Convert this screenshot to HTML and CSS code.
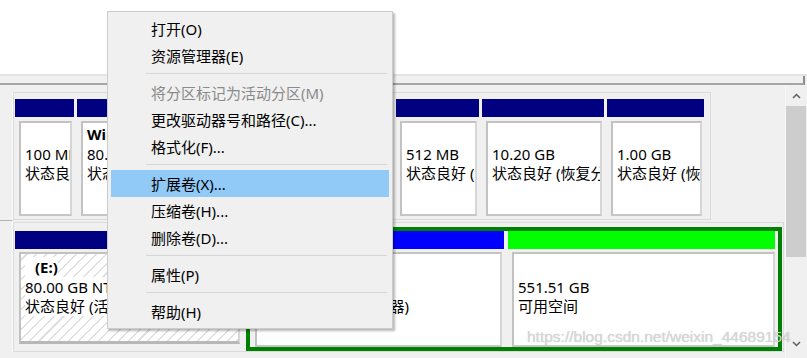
FILE: index.html
```html
<!DOCTYPE html>
<html lang="zh-CN">
<head>
  <meta charset="UTF-8" />
  <meta name="viewport" content="width=device-width, initial-scale=1" />
  <title>磁盘管理</title>
  <link rel="stylesheet" href="styles.css">
</head>
<body>
  <div class="top-pane"></div>
  <div class="splitter"></div>

  <div class="disk-pane">
    <div class="labels">
      <div class="label-cell first"></div>
      <div class="label-cell"></div>
    </div>

    <div class="disks">
      <!-- 磁盘 0 -->
      <div class="disk-row row-one">
        <div class="part w59">
          <div class="bar navy"></div>
          <div class="part-body"><div class="box"><div class="line"></div><div class="line">100 MB</div><div class="line">状态良好 (EFI 系统分区)</div></div></div>
        </div>
        <div class="part w316">
          <div class="bar navy"></div>
          <div class="part-body"><div class="box"><div class="line bold">Windows (C:)</div><div class="line">80.00 GB NTFS</div><div class="line">状态良好 (启动, 页面文件, 故障转储, 主分区)</div></div></div>
        </div>
        <div class="part w83">
          <div class="bar navy"></div>
          <div class="part-body"><div class="box"><div class="line"></div><div class="line">512 MB</div><div class="line">状态良好 (恢复分区)</div></div></div>
        </div>
        <div class="part w122">
          <div class="bar navy"></div>
          <div class="part-body"><div class="box"><div class="line"></div><div class="line">10.20 GB</div><div class="line">状态良好 (恢复分区)</div></div></div>
        </div>
        <div class="part w97">
          <div class="bar navy"></div>
          <div class="part-body"><div class="box"><div class="line"></div><div class="line">1.00 GB</div><div class="line">状态良好 (恢复分区)</div></div></div>
        </div>
      </div>

      <!-- 磁盘 1 -->
      <div class="disk-row row-two">
        <div class="part w227 primary-e">
          <div class="bar navy"></div>
          <div class="part-body"><div class="box hatched"><div class="line bold"><span> (E:)</span></div><div class="line"><span>80.00 GB NTFS</span></div><div class="line"><span>状态良好 (活动, 主分区)</span></div></div></div>
        </div>
        <div class="extended">
          <div class="part w253">
            <div class="bar blue"></div>
            <div class="part-body"><div class="box"><div class="line bold">新加卷 (F:)</div><div class="line">30.00 GB NTFS</div><div class="line">状态良好 (逻辑驱动器)</div></div></div>
          </div>
          <div class="part w267">
            <div class="bar green"></div>
            <div class="part-body flush"><div class="box"><div class="line"></div><div class="line">551.51 GB</div><div class="line">可用空间</div></div></div>
          </div>
        </div>
      </div>
    </div>

    <div class="scrollbar">
      <div class="scroll-btn">
        <svg width="9" height="6" viewBox="0 0 9 6"><path d="M1 5 L4.5 1.5 L8 5" fill="none" stroke="#606060" stroke-width="1.5"/></svg>
      </div>
      <div class="thumb"></div>
      <div class="scroll-space"></div>
      <div class="scroll-btn">
        <svg width="9" height="6" viewBox="0 0 9 6"><path d="M1 1 L4.5 4.5 L8 1" fill="none" stroke="#606060" stroke-width="1.5"/></svg>
      </div>
    </div>
  </div>

  <div class="context-menu">
    <div class="item">打开(O)</div>
    <div class="item">资源管理器(E)</div>
    <div class="sep"></div>
    <div class="item disabled">将分区标记为活动分区(M)</div>
    <div class="item">更改驱动器号和路径(C)...</div>
    <div class="item">格式化(F)...</div>
    <div class="sep"></div>
    <div class="item active">扩展卷(X)...</div>
    <div class="item">压缩卷(H)...</div>
    <div class="item">删除卷(D)...</div>
    <div class="sep"></div>
    <div class="item">属性(P)</div>
    <div class="sep"></div>
    <div class="item">帮助(H)</div>
  </div>

  <div class="watermark">https://blog.csdn.net/weixin_44689154</div>
</body>
</html>
```

FILE: styles.css
```css
body {
  margin: 0;
  width: 807px;
  height: 358px;
  overflow: hidden;
  position: relative;
  background-color: #f0f0f0;
  font-family: "Noto Sans", "Noto Sans CJK SC", sans-serif;
  font-size: 15px;
  color: #000;
}

.top-pane {
  height: 74px;
  background: #fff;
  border-bottom: 2px solid #e4e4e4;
}

.splitter {
  height: 7px;
  margin-right: 2px;
  border-bottom: 2px solid #a5a5a5;
  border-right: 2px solid #8c8c8c;
}

.disk-pane {
  display: flex;
  height: 273px;
}

.labels {
  width: 13px;
  padding-top: 7px;
}
.label-cell {
  height: 128px;
  border-right: 1px solid #fbfbfb;
  border-bottom: 1px solid #b5b5b5;
  box-sizing: border-box;
}
.label-cell.first {
  height: 129px;
}
.label-cell + .label-cell {
  border-bottom: none;
  height: 131px;
}

.disks {
  width: 772px;
  padding-top: 7px;
}

.disk-row {
  display: flex;
  box-sizing: border-box;
  border: 1px solid #dadada;
  padding-left: 1px;
}
.row-one {
  width: 698px;
  height: 128px;
  padding-top: 6px;
  gap: 3px;
  margin-bottom: 2px;
}
.row-two {
  width: 771px;
  height: 130px;
  padding-top: 4px;
  gap: 4px;
}

.part {
  display: flex;
  flex-direction: column;
}
.w59 { width: 59px; }
.w316 { width: 316px; }
.w83 { width: 83px; }
.w122 { width: 122px; }
.w97 { width: 97px; }
.w227 { width: 227px; }
.w253 { width: 253px; }
.w267 { width: 267px; }

.bar {
  height: 18px;
  flex: none;
}
.navy { background: #000080; }
.blue { background: #0000ff; }
.green { background: #00ff00; }

.part-body {
  padding: 4px 2px 3px 4px;
}
.row-two .part-body {
  padding: 3px 2px 0 4px;
}
.row-two .part-body.flush {
  padding-right: 0;
}

.box {
  height: 95px;
  box-sizing: border-box;
  background: #fff;
  border: 2px solid;
  border-color: #c2c2c2 #d6d6d6 #c6c6c6 #c2c2c2;
  padding: 2px 4px 0 4px;
  overflow: hidden;
  white-space: nowrap;
}
.row-two .box {
  padding-top: 4px;
}
.line {
  height: 19.5px;
  line-height: 19.5px;
}
.bold {
  font-weight: bold;
}

.primary-e {
  margin-top: 4px;
}
.primary-e .box {
  height: 92px;
  border-bottom: 3px solid #b8b8b8;
}
.hatched {
  background: repeating-linear-gradient(135deg, #ffffff 0 3.5px, #e0e0e0 3.5px 5px, #ffffff 5px 7px);
}
.hatched span {
  background: #fff;
}
.hatched .bold span {
  padding-left: 10px;
}

.extended {
  display: flex;
  gap: 4px;
  width: 536px;
  height: 124px;
  box-sizing: border-box;
  border: 4px solid #008000;
  padding-left: 1px;
}

.scrollbar {
  width: 20px;
  border-left: 1px solid #f7f7f7;
  display: flex;
  flex-direction: column;
}
.scroll-btn {
  height: 21px;
  display: flex;
  align-items: center;
  justify-content: center;
}
.thumb {
  height: 151px;
  background: #cdcdcd;
}
.scroll-space {
  flex: 1;
}
.scrollbar .scroll-btn:last-child {
  margin-bottom: 4px;
}

.context-menu {
  position: absolute;
  left: 107px;
  top: 11px;
  width: 286px;
  box-sizing: border-box;
  padding: 3px;
  background: #f0f0f0;
  border: 1px solid #cccccc;
  box-shadow: 2px 2px 2px rgba(0,0,0,0.28);
}
.item {
  height: 25px;
  line-height: 25px;
  padding-top: 2px;
  padding-left: 40px;
  white-space: nowrap;
}
.item.disabled {
  color: #8a8a8a;
}
.item.active {
  background: #91c9f7;
}
.sep {
  height: 1px;
  margin: 4px 2px 5px 35px;
  background: #d7d7d7;
}

.watermark {
  position: absolute;
  left: 527px;
  top: 328px;
  font-family: "Liberation Sans", sans-serif;
  font-size: 15.5px;
  color: rgba(215,215,215,0.9);
  text-shadow: 0 0 1px rgba(150,150,150,0.5);
  white-space: nowrap;
}
```
